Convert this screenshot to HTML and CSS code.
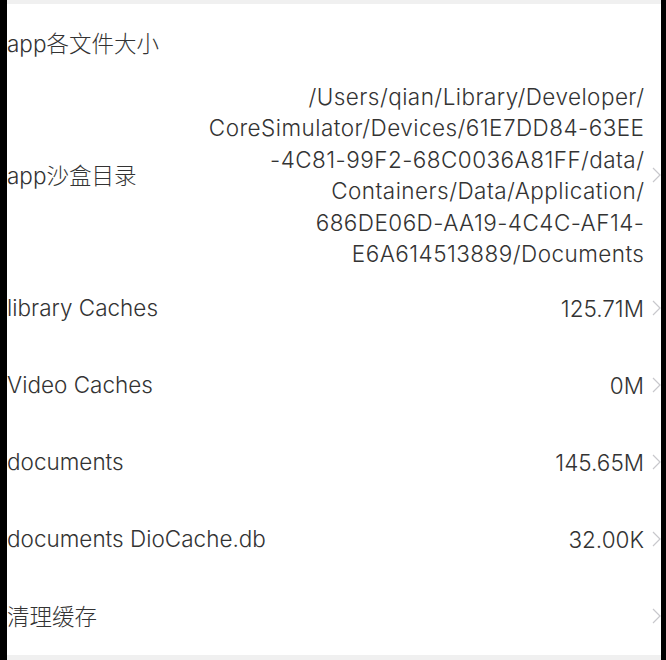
FILE: index.html
```html
<!DOCTYPE html>
<html lang="zh-CN">
<head>
<meta charset="utf-8">
<title>缓存</title>
<link rel="stylesheet" href="styles.css">
</head>
<body>
<div class="screen">
  <ul class="list">
    <li class="row">
      <span class="label">app各文件大小</span>
    </li>
    <li class="row row-path">
      <span class="label">app沙盒目录</span>
      <span class="value path">
        <span class="line">/Users/qian/Library/Developer/</span>
        <span class="line">CoreSimulator/Devices/61E7DD84-63EE</span>
        <span class="line">-4C81-99F2-68C0036A81FF/data/</span>
        <span class="line">Containers/Data/Application/</span>
        <span class="line">686DE06D-AA19-4C4C-AF14-</span>
        <span class="line">E6A614513889/Documents</span>
      </span>
      <svg class="chev" viewBox="0 0 9 16"><path d="M1 1l7 7-7 7"/></svg>
    </li>
    <li class="row">
      <span class="label">library Caches</span>
      <span class="value">125.71M</span>
      <svg class="chev" viewBox="0 0 9 16"><path d="M1 1l7 7-7 7"/></svg>
    </li>
    <li class="row">
      <span class="label">Video Caches</span>
      <span class="value">0M</span>
      <svg class="chev" viewBox="0 0 9 16"><path d="M1 1l7 7-7 7"/></svg>
    </li>
    <li class="row">
      <span class="label">documents</span>
      <span class="value">145.65M</span>
      <svg class="chev" viewBox="0 0 9 16"><path d="M1 1l7 7-7 7"/></svg>
    </li>
    <li class="row">
      <span class="label">documents DioCache.db</span>
      <span class="value">32.00K</span>
      <svg class="chev" viewBox="0 0 9 16"><path d="M1 1l7 7-7 7"/></svg>
    </li>
    <li class="row">
      <span class="label">清理缓存</span>
      <span class="value"></span>
      <svg class="chev" viewBox="0 0 9 16"><path d="M1 1l7 7-7 7"/></svg>
    </li>
  </ul>
</div>
</body>
</html>
```
FILE: styles.css
```css
html, body {
  margin: 0;
  padding: 0;
  background: #000;
  height: 660px;
  overflow: hidden;
}
.screen {
  margin: 0 5px 0 7px;
  height: 660px;
  background: #f0f0f0;
  padding-top: 4px;
  box-sizing: border-box;
}
.list {
  list-style: none;
  margin: 0;
  padding: 0;
  background: #fff;
}
.row {
  display: flex;
  align-items: center;
  height: 77px;
  padding-right: 0;
  font-family: Inter, "Noto Sans CJK SC", sans-serif;
  font-size: 22.5px;
  font-weight: 300;
  color: #333;
}
.row-path {
  height: 188.5px;
}
.label {
  flex: 1 1 auto;
  white-space: nowrap;
  position: relative;
  top: -1px;
}
.value {
  text-align: right;
  white-space: nowrap;
}
.path {
  line-height: 31.4px;
  letter-spacing: 0.45px;
  margin-right: -0.45px;
}
.line {
  display: block;
}
.chev {
  width: 9px;
  height: 16px;
  margin-left: 8px;
  flex: none;
}
.chev path {
  fill: none;
  stroke: #c8c8cc;
  stroke-width: 1.2;
}
```
